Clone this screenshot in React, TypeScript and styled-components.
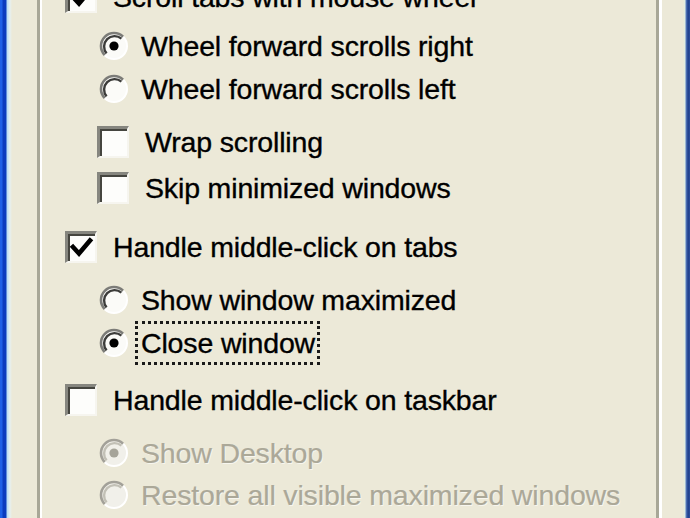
import React from 'react';
import styled, { createGlobalStyle } from 'styled-components';

const GlobalStyle = createGlobalStyle`
  html, body {
    margin: 0;
    padding: 0;
    background: #ece9d8;
    overflow: hidden;
  }
`;

type Kind = 'check' | 'radio';

interface Option {
  kind: Kind;
  label: string;
  level: 1 | 2;
  top: number;
  checked?: boolean;
  disabled?: boolean;
  focused?: boolean;
}

const options: Option[] = [
  { kind: 'check', label: 'Scroll tabs with mouse wheel', level: 1, top: -23, checked: true },
  { kind: 'radio', label: 'Wheel forward scrolls right', level: 2, top: 9, checked: true },
  { kind: 'radio', label: 'Wheel forward scrolls left', level: 2, top: 3 },
  { kind: 'check', label: 'Wrap scrolling', level: 2, top: 13 },
  { kind: 'check', label: 'Skip minimized windows', level: 2, top: 6 },
  { kind: 'check', label: 'Handle middle-click on tabs', level: 1, top: 19, checked: true },
  { kind: 'radio', label: 'Show window maximized', level: 2, top: 13 },
  { kind: 'radio', label: 'Close window', level: 2, top: 3, checked: true, focused: true },
  { kind: 'check', label: 'Handle middle-click on taskbar', level: 1, top: 17 },
  { kind: 'radio', label: 'Show Desktop', level: 2, top: 13, checked: true, disabled: true },
  { kind: 'radio', label: 'Restore all visible maximized windows', level: 2, top: 2, disabled: true },
];

const RadioMark = ({ checked, disabled }: { checked?: boolean; disabled?: boolean }) => (
  <svg width="30" height="30" viewBox="0 0 30 30">
    <circle cx="15" cy="15" r="13" fill={disabled ? '#f1f0ea' : '#fbfbf8'} />
    <path
      d="M 5.8 24.2 A 13 13 0 0 1 24.2 5.8"
      fill="none"
      stroke={disabled ? '#a3a199' : '#7c7c78'}
      strokeWidth="2.6"
    />
    <path
      d="M 7.6 22.4 A 10.5 10.5 0 0 1 22.4 7.6"
      fill="none"
      stroke={disabled ? '#c2c0b6' : '#3c3c3a'}
      strokeWidth="2.4"
    />
    <path
      d="M 24.2 5.8 A 13 13 0 0 1 5.8 24.2"
      fill="none"
      stroke="#ffffff"
      strokeWidth="2"
    />
    {checked && <circle cx="15" cy="15" r="4.6" fill={disabled ? '#a6a49a' : '#000'} />}
  </svg>
);

const CheckMark = () => (
  <svg width="27" height="27" viewBox="0 0 27 27">
    <polyline
      points="5,13 11,19.5 22,6.5"
      fill="none"
      stroke="#000"
      strokeWidth="4.6"
      strokeLinecap="square"
      strokeLinejoin="miter"
    />
  </svg>
);

const App = () => (
  <Frame>
    <GlobalStyle />
    <BlueEdge />
    <DialogBody>
      <GroupBox>
        <OptionList>
          {options.map((o) => (
            <Row key={o.label} $top={o.top} $level={o.level}>
              {o.kind === 'check' ? (
                <CheckBox>{o.checked && <CheckMark />}</CheckBox>
              ) : (
                <RadioBox>
                  <RadioMark checked={o.checked} disabled={o.disabled} />
                </RadioBox>
              )}
              <Label $disabled={o.disabled} $focused={o.focused} $kind={o.kind}>
                {o.label}
              </Label>
            </Row>
          ))}
        </OptionList>
      </GroupBox>
    </DialogBody>
    <BlueEdgeRight />
  </Frame>
);

const Frame = styled.div`
  display: flex;
  width: 690px;
  height: 518px;
  overflow: hidden;
  background: #ece9d8;
`;

const BlueEdge = styled.div`
  flex: 0 0 12px;
  background: linear-gradient(
    to right,
    #1d5fe6 0px,
    #1d5fe6 2px,
    #0a3bbf 3px,
    #0a3bbf 6px,
    #b6dcf6 7px,
    #e6f0f0 10px,
    #ece9d8 12px
  );
`;

const BlueEdgeRight = styled.div`
  flex: 0 0 7px;
  background: linear-gradient(
    to right,
    #ece9d8 0px,
    #e2efe2 2px,
    #5a7fc0 3px,
    #1f3f8c 5px,
    #2c4f9c 7px
  );
`;

const DialogBody = styled.div`
  flex: 1;
  display: flex;
  padding: 0 21px 0 25px;
  background: #ece9d8;
`;

const GroupBox = styled.div`
  flex: 1;
  border-left: 3px solid #a8a797;
  border-right: 3px solid #ffffff;
  box-shadow: inset 2px 0 0 #ffffff, inset -3px 0 0 #a8a797;
  padding-left: 25px;
`;

const OptionList = styled.div`
  display: flex;
  flex-direction: column;
`;

const Row = styled.div<{ $top: number; $level: number }>`
  display: flex;
  align-items: center;
  height: 40px;
  margin-top: ${(p) => p.$top}px;
  padding-left: ${(p) => (p.$level === 1 ? 0 : 32)}px;
  font-family: 'Liberation Sans', Arial, sans-serif;
  font-size: 28.5px;
  letter-spacing: -0.15px;
  white-space: nowrap;
`;

const CheckBox = styled.div`
  box-sizing: border-box;
  width: 32px;
  height: 32px;
  display: flex;
  align-items: center;
  justify-content: center;
  background: #fdfdfb;
  border-top: 3px solid #86867f;
  border-left: 3px solid #86867f;
  border-right: 2px solid #f6f5ef;
  border-bottom: 2px solid #f6f5ef;
  box-shadow: inset 2px 2px 0 #45453f;
`;

const RadioBox = styled.div`
  width: 30px;
  height: 30px;
  margin-left: 2px;
  display: flex;
`;

const Label = styled.span<{ $disabled?: boolean; $focused?: boolean; $kind: Kind }>`
  box-sizing: border-box;
  height: 44px;
  margin-left: ${(p) => (p.$kind === 'radio' ? 6 : 10)}px;
  padding: 0 2px 0 3px;
  border: 3px dotted ${(p) => (p.$focused ? '#1a1a1a' : 'transparent')};
  color: ${(p) => (p.$disabled ? '#aba898' : '#000')};
  -webkit-text-stroke: ${(p) => (p.$disabled ? '0.2px #aba898' : '0.35px #000')};
  text-shadow: ${(p) => (p.$disabled ? '1px 1px 0 rgba(255,255,255,0.6)' : 'none')};
  line-height: 38px;
`;

export default App;
